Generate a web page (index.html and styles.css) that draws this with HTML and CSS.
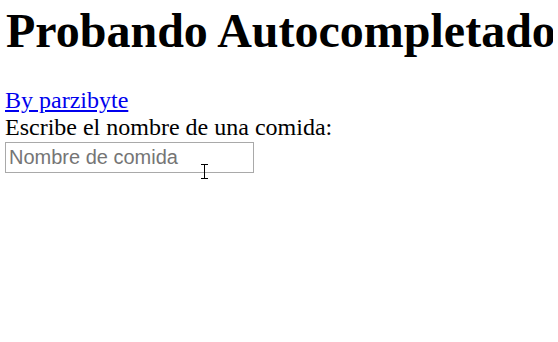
FILE: index.html
```html
<!DOCTYPE html>
<html lang="es">
<head>
<meta charset="utf-8">
<title>Probando Autocompletado</title>
<link rel="stylesheet" href="styles.css">
</head>
<body>
<h1 class="title">Probando Autocompletado</h1>
<a class="author" href="#">By parzibyte</a>
<label class="label" for="comida">Escribe el nombre de una comida:</label>
<div class="field">
  <input id="comida" class="input" type="text" placeholder="Nombre de comida">
  <span class="cursor" aria-hidden="true"></span>
</div>
</body>
</html>
```
FILE: styles.css
```css
html, body {
  background: #fff;
}
html {
  min-height: 100%;
}
body {
  margin: 0 5px;
  min-height: 342px;
  font-family: "Liberation Serif", "Times New Roman", serif;
  font-size: 24px;
  color: #000;
}
.title {
  font-size: 48px;
  font-weight: bold;
  margin: 3px 0 29px 1px;
  line-height: normal;
  white-space: nowrap;
}
.author {
  display: block;
  width: max-content;
  color: #0000ee;
  text-decoration: underline;
  line-height: normal;
}
.label {
  display: block;
  line-height: normal;
}
.field {
  position: relative;
  margin-top: 1px;
  padding-bottom: 12px;
  width: max-content;
}
.input {
  box-sizing: border-box;
  display: block;
  width: 249px;
  height: 31px;
  margin: 0;
  padding: 1px 3px;
  border: 1px solid #a9a9a9;
  background: #fff;
  font-family: "Liberation Sans", Arial, sans-serif;
  font-size: 20px;
  color: #000;
  outline: none;
}
.input::placeholder {
  color: #757575;
  opacity: 1;
}
.cursor {
  position: absolute;
  z-index: 2;
  left: 199px;
  top: 22px;
  width: 1px;
  height: 15px;
  background: #000;
}
.cursor::before,
.cursor::after {
  content: "";
  position: absolute;
  left: -3px;
  width: 7px;
  height: 1px;
  background: #000;
}
.cursor::before {
  top: 0;
}
.cursor::after {
  bottom: 0;
}
```
